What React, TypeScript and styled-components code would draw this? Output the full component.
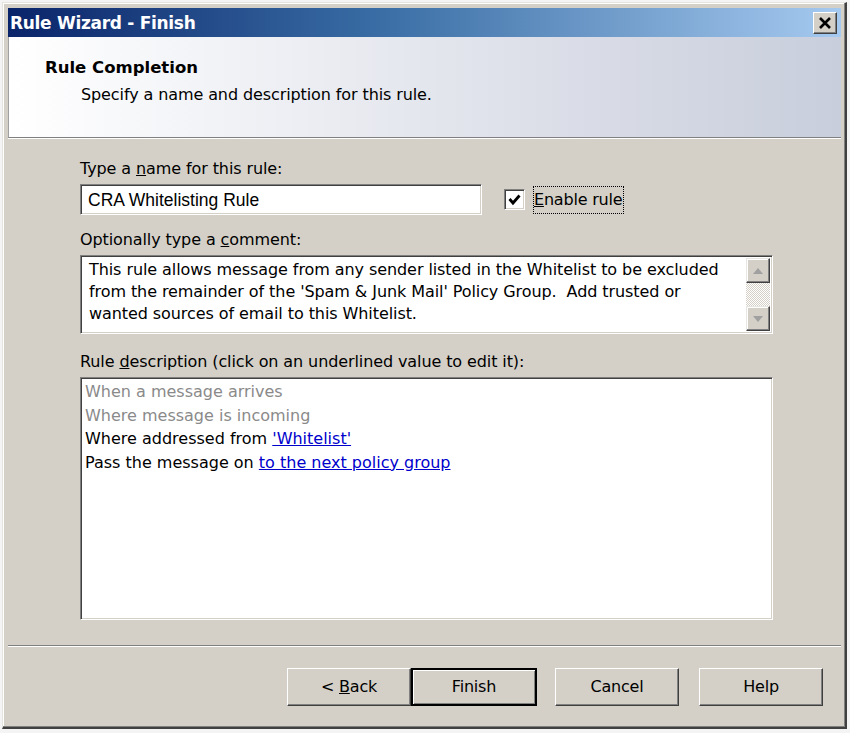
import * as React from "react";
import styled, { createGlobalStyle } from "styled-components";

const GlobalStyle = createGlobalStyle`
  html, body {
    margin: 0;
    padding: 0;
    background: #f4f4f4;
  }
  body {
    font-family: "Liberation Sans", Arial, sans-serif;
  }
`;

const Window = styled.div`
  box-sizing: border-box;
  display: flex;
  flex-direction: column;
  width: 845px;
  height: 727px;
  margin: 2px 0 0 2px;
  padding: 5px 4px 4px 5px;
  background: #d4d0c8;
  border-left: 1px solid #e6e4df;
  border-top: 1px solid #e6e4df;
  border-right: 2px solid #404040;
  border-bottom: 2px solid #404040;
  box-shadow: inset -1px -1px 0 #808080, inset 1px 1px 0 #ffffff;
`;

const TitleBar = styled.div`
  display: flex;
  align-items: center;
  justify-content: space-between;
  height: 29px;
  padding: 0 4px 0 2px;
  background: linear-gradient(90deg, #0a246a 0%, #3a6ea5 45%, #a6caf0 100%);
`;

const Title = styled.span`
  color: #ffffff;
  font-family: "DejaVu Sans", Verdana, sans-serif;
  font-weight: bold;
  font-size: 17px;
  letter-spacing: -0.3px;
`;

const CloseButton = styled.div`
  box-sizing: border-box;
  width: 24px;
  height: 22px;
  display: flex;
  align-items: center;
  justify-content: center;
  background: #d4d0c8;
  border-top: 1px solid #ffffff;
  border-left: 1px solid #ffffff;
  border-right: 1px solid #404040;
  border-bottom: 1px solid #404040;
  box-shadow: inset -1px -1px 0 #808080;
`;

const Header = styled.div`
  box-sizing: border-box;
  height: 101px;
  padding: 21px 0 0 36px;
  background: linear-gradient(90deg, #ffffff 0%, #eceef3 35%, #d9dce6 70%, #c8cedc 100%);
  border-left: 1px solid #a0a0a0;
  border-bottom: 1px solid #808080;
  box-shadow: 0 1px 0 #ffffff;
`;

const HeaderTitle = styled.div`
  font-family: "DejaVu Sans", Verdana, sans-serif;
  font-weight: bold;
  font-size: 16.5px;
  color: #000000;
  line-height: 20px;
`;

const HeaderSub = styled.div`
  margin: 7px 0 0 36px;
  font-family: "DejaVu Sans", Verdana, sans-serif;
  font-size: 16px;
  color: #000000;
  letter-spacing: -0.1px;
  line-height: 20px;
`;

const Body = styled.div`
  display: flex;
  flex-direction: column;
  padding: 22px 68px 0 72px;
`;

const Label = styled.div<{ $gap?: number }>`
  font-family: "DejaVu Sans", Verdana, sans-serif;
  font-size: 16px;
  letter-spacing: -0.1px;
  color: #000000;
  line-height: 18px;
  margin-top: ${(p) => p.$gap ?? 0}px;
  margin-bottom: 6px;
`;

const Mnemonic = styled.span`
  text-decoration: underline;
`;

const NameRow = styled.div`
  display: flex;
  align-items: center;
`;

const sunken = `
  box-sizing: border-box;
  background: #ffffff;
  border-top: 1px solid #808080;
  border-left: 1px solid #808080;
  border-right: 1px solid #ffffff;
  border-bottom: 1px solid #ffffff;
  box-shadow: inset 1px 1px 0 #404040, inset -1px -1px 0 #d4d0c8;
`;

const TextInput = styled.div`
  ${sunken}
  width: 402px;
  height: 31px;
  padding: 5px 0 0 7px;
  font-family: "Liberation Sans", Arial, sans-serif;
  font-size: 17.5px;
  color: #000000;
`;

const CheckWrap = styled.div`
  display: flex;
  align-items: center;
  margin-left: 22px;
  gap: 9px;
`;

const CheckBox = styled.div`
  ${sunken}
  width: 21px;
  height: 21px;
  display: flex;
  align-items: center;
  justify-content: center;
`;

const CheckLabel = styled.span`
  padding: 3px 1px 4px 0;
  outline: 1px dotted #000000;
  font-family: "DejaVu Sans", Verdana, sans-serif;
  font-size: 16px;
  letter-spacing: -0.2px;
  color: #000000;
`;

const CommentBox = styled.div`
  ${sunken}
  display: flex;
  height: 79px;
`;

const CommentText = styled.div`
  flex: 1;
  padding: 3px 8px 0 8px;
  font-family: "DejaVu Sans", Verdana, sans-serif;
  font-size: 16px;
  letter-spacing: -0.08px;
  line-height: 22px;
  color: #000000;
`;

const ScrollBar = styled.div`
  display: flex;
  flex-direction: column;
  width: 24px;
  margin: 2px 2px 2px 0;
`;

const ScrollButton = styled.div`
  box-sizing: border-box;
  height: 25px;
  display: flex;
  align-items: center;
  justify-content: center;
  background: #d4d0c8;
  border-top: 1px solid #e8e6e2;
  border-left: 1px solid #e8e6e2;
  border-right: 1px solid #404040;
  border-bottom: 1px solid #404040;
  box-shadow: inset -1px -1px 0 #808080, inset 1px 1px 0 #ffffff;
`;

const ScrollTrack = styled.div`
  flex: 1;
  background-color: #ffffff;
  background-image: repeating-conic-gradient(#d4d0c8 0% 25%, #ffffff 0% 50%);
  background-size: 2px 2px;
`;

const DescBox = styled.div`
  ${sunken}
  height: 243px;
  padding: 2px 0 0 4px;
  font-family: "DejaVu Sans", Verdana, sans-serif;
  font-size: 16px;
  letter-spacing: 0;
  line-height: 23.6px;
`;

const DescLine = styled.div<{ $muted?: boolean }>`
  color: ${(p) => (p.$muted ? "#8a8a8a" : "#000000")};
`;

const ValueLink = styled.span`
  color: #0000cc;
  text-decoration: underline;
`;

const Separator = styled.div`
  height: 1px;
  margin-top: 25px;
  background: #808080;
  box-shadow: 0 1px 0 #ffffff;
`;

const Footer = styled.div`
  display: flex;
  justify-content: flex-end;
  align-items: center;
  padding: 22px 18px 0 0;
`;

const Button = styled.div<{ $default?: boolean; $gap?: number }>`
  box-sizing: border-box;
  width: ${(p) => (p.$default ? 126 : 124)}px;
  height: 38px;
  margin-left: ${(p) => p.$gap ?? 0}px;
  text-align: center;
  line-height: 35px;
  white-space: pre;
  background: #d4d0c8;
  font-family: "DejaVu Sans", Verdana, sans-serif;
  font-size: 16px;
  letter-spacing: -0.2px;
  color: #000000;
  border-top: 1px solid #ffffff;
  border-left: 1px solid #ffffff;
  border-right: 1px solid #404040;
  border-bottom: 1px solid #404040;
  box-shadow: inset -1px -1px 0 #808080;
  ${(p) =>
    p.$default &&
    `
    line-height: 33px;
    border: 2px solid #000000;
    box-shadow: inset 1px 1px 0 #ffffff, inset -1px -1px 0 #808080;
  `}
`;

export default function App() {
  return (
    <>
      <GlobalStyle />
      <Window>
        <TitleBar>
          <Title>Rule Wizard - Finish</Title>
          <CloseButton>
            <svg width="14" height="12" viewBox="0 0 14 12">
              <path d="M2 1 L12 11 M12 1 L2 11" stroke="#000" strokeWidth="2.6" />
            </svg>
          </CloseButton>
        </TitleBar>
        <Header>
          <HeaderTitle>Rule Completion</HeaderTitle>
          <HeaderSub>Specify a name and description for this rule.</HeaderSub>
        </Header>
        <Body>
          <Label>
            Type a <Mnemonic>n</Mnemonic>ame for this rule:
          </Label>
          <NameRow>
            <TextInput>CRA Whitelisting Rule</TextInput>
            <CheckWrap>
              <CheckBox>
                <svg width="13" height="13" viewBox="0 0 13 13">
                  <path d="M1.5 6 L5 10 L11.5 2.5" stroke="#000" strokeWidth="2.8" fill="none" />
                </svg>
              </CheckBox>
              <CheckLabel>
                <Mnemonic>E</Mnemonic>nable rule
              </CheckLabel>
            </CheckWrap>
          </NameRow>
          <Label $gap={16}>
            Optionally type a <Mnemonic>c</Mnemonic>omment:
          </Label>
          <CommentBox>
            <CommentText>
              This rule allows message from any sender listed in the Whitelist to be excluded
              from the remainder of the 'Spam &amp; Junk Mail' Policy Group.&nbsp; Add trusted or
              wanted sources of email to this Whitelist.
            </CommentText>
            <ScrollBar>
              <ScrollButton>
                <svg width="10" height="6" viewBox="0 0 10 6">
                  <path d="M5 0 L10 6 L0 6 Z" fill="#a0a0a0" />
                </svg>
              </ScrollButton>
              <ScrollTrack />
              <ScrollButton>
                <svg width="10" height="6" viewBox="0 0 10 6">
                  <path d="M0 0 L10 0 L5 6 Z" fill="#a0a0a0" />
                </svg>
              </ScrollButton>
            </ScrollBar>
          </CommentBox>
          <Label $gap={19}>
            Rule <Mnemonic>d</Mnemonic>escription (click on an underlined value to edit it):
          </Label>
          <DescBox>
            <DescLine $muted>When a message arrives</DescLine>
            <DescLine $muted>Where message is incoming</DescLine>
            <DescLine>
              Where addressed from <ValueLink>'Whitelist'</ValueLink>
            </DescLine>
            <DescLine>
              Pass the message on <ValueLink>to the next policy group</ValueLink>
            </DescLine>
          </DescBox>
        </Body>
        <Separator />
        <Footer>
          <Button>
            &lt; <Mnemonic>B</Mnemonic>ack
          </Button>
          <Button $default>Finish</Button>
          <Button $gap={18}>Cancel</Button>
          <Button $gap={20}>Help</Button>
        </Footer>
      </Window>
    </>
  );
}
